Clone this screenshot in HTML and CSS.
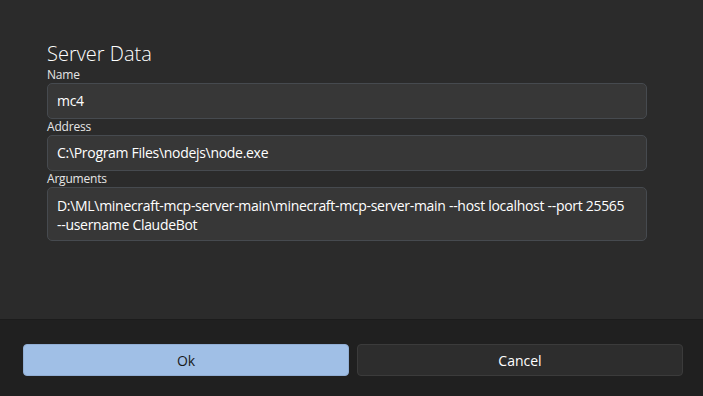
FILE: index.html
```html
<!DOCTYPE html>
<html lang="en">
<head>
  <meta charset="UTF-8" />
  <title>Server Data</title>
  <link rel="stylesheet" href="styles.css">
</head>
<body>
  <div class="dialog">
    <div class="content">
      <div class="title">Server Data</div>

      <div class="field">
        <div class="label">Name</div>
        <div class="input">mc4</div>
      </div>

      <div class="field">
        <div class="label">Address</div>
        <div class="input">C:\Program Files\nodejs\node.exe</div>
      </div>

      <div class="field">
        <div class="label">Arguments</div>
        <div class="input multi">D:\ML\minecraft-mcp-server-main\minecraft-mcp-server-main <span class="nb">--host</span> localhost <span class="nb">--port</span> 25565 <span class="nb">--username</span> ClaudeBot</div>
      </div>
    </div>

    <div class="footer">
      <button class="btn primary">Ok</button>
      <button class="btn">Cancel</button>
    </div>
  </div>
</body>
</html>
```

FILE: styles.css
```css
* {
  box-sizing: border-box;
  font-family: "Segoe UI", "Open Sans", "Noto Sans", sans-serif;
}
html, body {
  margin: 0;
  padding: 0;
  width: 100%;
  height: 100%;
  overflow: hidden;
  background: #2b2b2b;
  color: #ffffff;
}
.dialog {
  display: flex;
  flex-direction: column;
  height: 100%;
}
.content {
  flex: 1;
  padding: 41px 56px 0 47px;
}
.title {
  font-size: 20px;
  font-weight: 300;
  line-height: 26px;
}
.field {
  display: flex;
  flex-direction: column;
}
.label {
  font-size: 12px;
  line-height: 16px;
  color: #e6e6e6;
  letter-spacing: -0.2px;
}
.input {
  background: #373737;
  border: 1px solid #464a4f;
  border-radius: 5px;
  height: 36px;
  padding: 0 9px;
  font-size: 14px;
  line-height: 34px;
  letter-spacing: -0.3px;
  color: #ffffff;
  white-space: nowrap;
}
.input.multi {
  height: 54px;
  white-space: normal;
  line-height: 19px;
  padding-top: 8px;
  padding-right: 10px;
}
.nb {
  white-space: nowrap;
}
.footer {
  height: 77px;
  background: #202020;
  border-top: 1px solid #1c1c1c;
  display: flex;
  gap: 8px;
  padding: 24px 20px 0 23px;
}
.btn {
  flex: 1;
  height: 32px;
  border-radius: 4px;
  border: 1px solid #3b3b3b;
  background: #2d2d2d;
  color: #ffffff;
  font-size: 14px;
  cursor: pointer;
}
.btn.primary {
  background: #a0bfe6;
  border-color: #91aed4;
  color: #1a1a1a;
}
```
